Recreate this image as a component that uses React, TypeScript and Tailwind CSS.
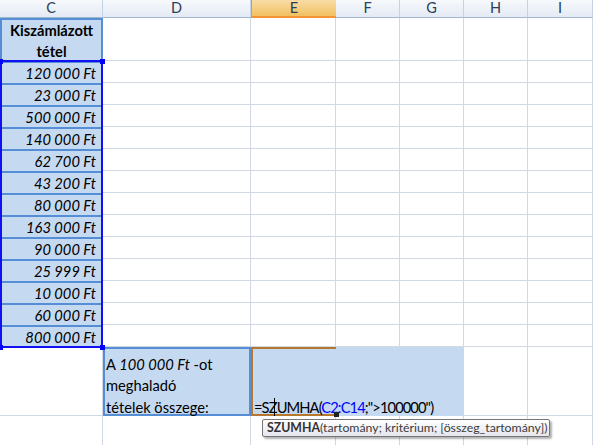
import React from "react";

const cols = [103, 148, 85, 64, 64, 64, 65];
const letters = ["C", "D", "E", "F", "G", "H", "I"];
const values = [
  "120 000 Ft",
  "23 000 Ft",
  "500 000 Ft",
  "140 000 Ft",
  "62 700 Ft",
  "43 200 Ft",
  "80 000 Ft",
  "163 000 Ft",
  "90 000 Ft",
  "25 999 Ft",
  "10 000 Ft",
  "60 000 Ft",
  "800 000 Ft",
];

const font = { fontFamily: "Lato, 'Open Sans', sans-serif" };

function Blank({ w, h }: { w: number; h: number }) {
  return (
    <div
      className="shrink-0 border-r border-b border-[#d0d7e5] bg-white"
      style={{ width: w, height: h }}
    />
  );
}

export default function App() {
  return (
    <div
      className="relative w-[593px] h-[445px] overflow-hidden bg-white text-[14.7px] text-black"
      style={font}
    >
      {/* header */}
      <div className="flex h-[18px]">
        {letters.map((l, i) =>
          l === "E" ? (
            <div
              key={l}
              className="shrink-0 flex items-center justify-center border-l border-[#f29436] border-b-2 border-b-[#f29436] bg-gradient-to-b from-[#f9dca6] to-[#f1c15f] text-[#2b3e57] text-[14.5px] leading-none"
              style={{ width: cols[i] }}
            >
              {l}
            </div>
          ) : (
            <div
              key={l}
              className="shrink-0 flex items-center justify-center border-r border-[#c5d2e3] border-b border-b-[#9eb6ce] bg-gradient-to-b from-[#f7f9fc] to-[#e4eaf4] text-[#2b3e57] text-[14.5px] leading-none"
              style={{ width: cols[i] }}
            >
              {l}
            </div>
          )
        )}
      </div>

      {/* row 1 */}
      <div className="flex h-[43px]">
        <div className="shrink-0 w-[103px] h-[43px] bg-[#c5d9f1] border-x-2 border-t-2 border-[#558ed5] flex flex-col items-center justify-center font-bold leading-[21px] text-[14.7px]">
          <span>Kiszámlázott</span>
          <span>tétel</span>
        </div>
        {cols.slice(1).map((w, i) => (
          <Blank key={i} w={w} h={43} />
        ))}
      </div>

      {/* rows 2-14 */}
      {values.map((v) => (
        <div key={v} className="flex h-[22px]">
          <div className="shrink-0 w-[103px] h-[22px] bg-[#c5d9f1] border-x-2 border-t-2 border-[#558ed5] flex items-end justify-end pr-[5px] italic leading-[20px]">
            {v}
          </div>
          {cols.slice(1).map((w, i) => (
            <Blank key={i} w={w} h={22} />
          ))}
        </div>
      ))}

      {/* row 15 */}
      <div className="flex h-[69px]">
        <div className="shrink-0 w-[103px] h-[69px] border-r border-b border-[#d0d7e5]" />
        <div className="shrink-0 w-[148px] h-[69px] bg-[#c5d9f1] border-2 border-[#558ed5] flex flex-col justify-end pl-[1px]">
          <div className="relative top-[4px] flex flex-col leading-[21.5px]">
            <span>
              A <i>100 000 Ft</i> -ot
            </span>
            <span>meghaladó</span>
            <span>tételek összege:</span>
          </div>
        </div>
        <div className="relative z-10 shrink-0 w-[85px] h-[69px] bg-[#c5d9f1] border-l-2 border-t-2 border-b-2 border-[#b6772e] flex items-end pl-[1px] leading-[21px] whitespace-nowrap">
          <span className="relative top-[4px] tracking-[-0.9px]">
            =SZUMHA(<span className="text-[#0000ff]">C2:C14</span>;"&gt;100000")
            <span className="absolute left-[20px] top-[1px] w-px h-[18px] bg-black" />
          </span>
          <div className="absolute right-[-3px] bottom-[-3px] w-[5px] h-[5px] bg-[#222]" />
        </div>
        <div className="shrink-0 w-[128px] h-[69px] bg-[#c5d9f1]" />
        <Blank w={64} h={69} />
        <Blank w={65} h={69} />
      </div>

      {/* row 16 */}
      <div className="flex h-[40px]">
        {cols.map((w, i) => (
          <Blank key={i} w={w} h={40} />
        ))}
      </div>

      {/* range reference outline C2:C14 */}
      <div className="absolute left-0 top-[60px] w-[103px] h-[288px] border-2 border-[#1010f0] pointer-events-none" />
      <div className="absolute left-[-2px] top-[59px] w-[5px] h-[5px] bg-[#0000ff]" />
      <div className="absolute left-[100px] top-[59px] w-[5px] h-[5px] bg-[#0000ff]" />
      <div className="absolute left-[-2px] top-[345px] w-[5px] h-[5px] bg-[#0000ff]" />
      <div className="absolute left-[100px] top-[345px] w-[5px] h-[5px] bg-[#0000ff]" />

      {/* tooltip */}
      <div
        className="absolute left-[262px] top-[419px] w-[288px] h-[18px] px-[4px] flex items-center rounded-[2px] border border-[#767676] bg-gradient-to-b from-white to-[#e5e6ee] text-[12.3px] leading-none text-[#3c3c3c] whitespace-nowrap shadow-[2px_2px_2px_rgba(0,0,0,0.3)] z-20"
        style={{ fontFamily: "Lato, 'Noto Sans', sans-serif" }}
      >
        <b className="font-bold text-[#333]">SZUMHA</b>(tartomány; kritérium; [összeg_tartomány])
      </div>
    </div>
  );
}
